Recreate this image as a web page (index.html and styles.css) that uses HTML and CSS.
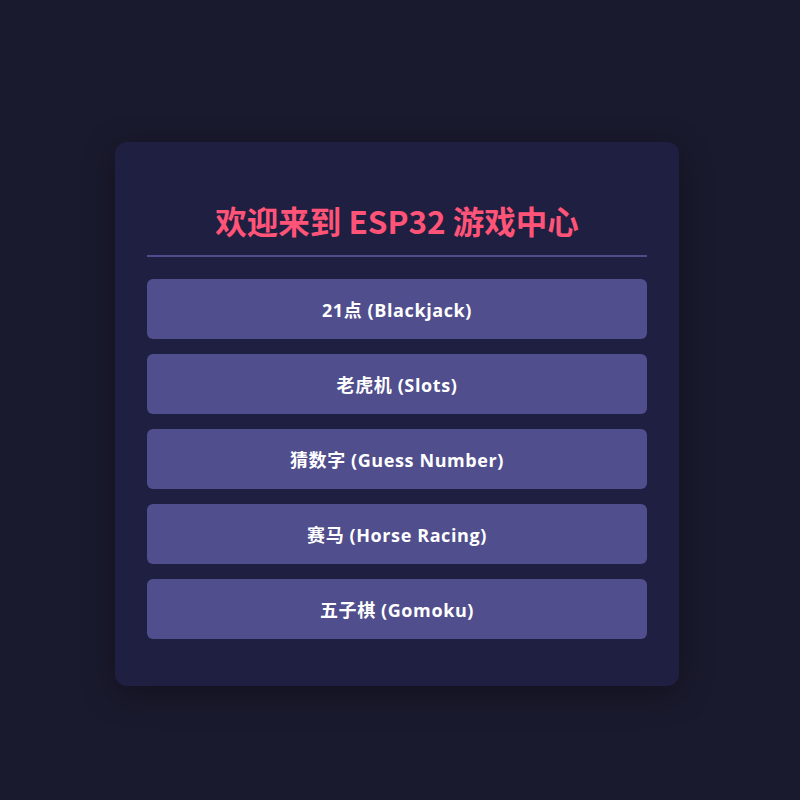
FILE: index.html
```html
<!DOCTYPE html>
<html lang="zh">
<head>
<meta charset="utf-8">
<link rel="stylesheet" href="styles.css">
</head>
<body>
<div class="page">
  <div class="card">
    <h1 class="title">欢迎来到 ESP32 游戏中心</h1>
    <div class="menu">
      <button class="game">21点 (Blackjack)</button>
      <button class="game">老虎机 (Slots)</button>
      <button class="game">猜数字 (Guess Number)</button>
      <button class="game">赛马 (Horse Racing)</button>
      <button class="game">五子棋 (Gomoku)</button>
    </div>
  </div>
</div>
</body>
</html>
```
FILE: styles.css
```css
html, body {
  margin: 0;
  padding: 0;
  background: #1a1a2e;
}
.page {
  box-sizing: border-box;
  width: 800px;
  height: 800px;
  padding: 28px 6px 0 0;
  display: flex;
  align-items: center;
  justify-content: center;
}
.card {
  width: 500px;
  padding: 40px 32px 47px;
  background: #1f1f41;
  border-radius: 12px;
  box-shadow: 0 8px 32px rgba(0, 0, 0, 0.35);
}
.title {
  margin: 17px 0 22px;
  padding-bottom: 14px;
  border-bottom: 2px solid #4f4d8c;
  text-align: center;
  color: #ff5478;
  font-family: "Noto Sans CJK SC", sans-serif;
  font-weight: 700;
  font-size: 31.5px;
  line-height: 42px;
}
.menu {
  display: flex;
  flex-direction: column;
  gap: 15px;
}
.game {
  height: 60px;
  border: none;
  border-radius: 6px;
  background: #504e8d;
  color: #ffffff;
  font-family: "Open Sans", "Noto Sans CJK SC", sans-serif;
  font-weight: 700;
  font-size: 18px;
  letter-spacing: 0.6px;
  padding: 0;
}
```
